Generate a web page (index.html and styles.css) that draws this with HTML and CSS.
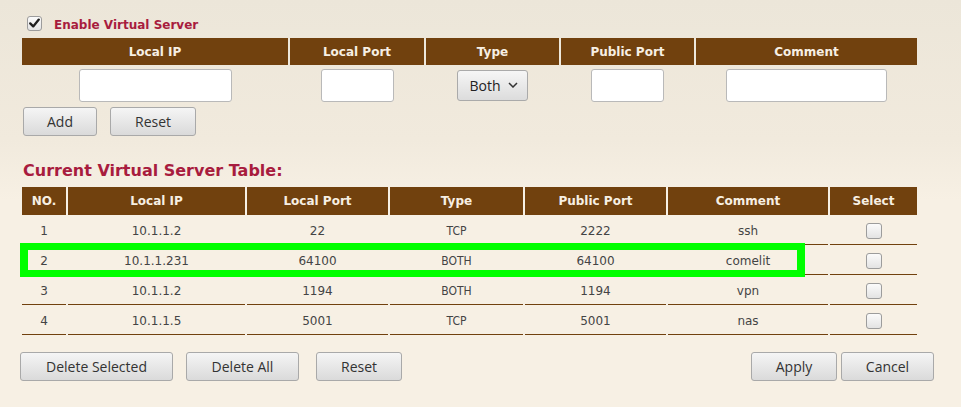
FILE: index.html
```html
<!DOCTYPE html>
<html lang="en">
<head>
    <meta charset="UTF-8">
    <title>Virtual Server</title>
    <link rel="stylesheet" href="styles.css">
</head>
<body>
<div class="page">

    <!-- enable switch -->
    <div class="enable">
        <span class="check checked">
            <svg width="15" height="15" viewBox="0 0 15 15"><path d="M3.2 7.4 L6.2 10.4 L11.8 3.6" fill="none" stroke="#1e1e1e" stroke-width="2.3" stroke-linecap="round" stroke-linejoin="round"/></svg>
        </span>
        <label class="enable-label">Enable Virtual Server</label>
    </div>

    <!-- new rule form -->
    <table class="grid add-form">
        <tr>
            <th class="w-ip">Local IP</th>
            <th class="w-lport">Local Port</th>
            <th class="w-type">Type</th>
            <th class="w-pport">Public Port</th>
            <th class="w-comment">Comment</th>
        </tr>
        <tr>
            <td><input type="text" class="field field-ip"></td>
            <td><input type="text" class="field field-port"></td>
            <td>
                <div class="select">Both
                    <svg width="10" height="6" viewBox="0 0 10 6"><path d="M1 1 L5 5 L9 1" fill="none" stroke="#333" stroke-width="1.5"/></svg>
                </div>
            </td>
            <td><input type="text" class="field field-port"></td>
            <td><input type="text" class="field field-comment"></td>
        </tr>
    </table>

    <div class="actions">
        <button class="btn btn-add">Add</button>
        <button class="btn btn-reset">Reset</button>
    </div>

    <h2 class="section-title">Current Virtual Server Table:</h2>

    <div class="list-wrap">
        <table class="grid list">
            <tr>
                <th class="l-no">NO.</th>
                <th class="l-ip">Local IP</th>
                <th class="l-lport">Local Port</th>
                <th class="l-type">Type</th>
                <th class="l-pport">Public Port</th>
                <th class="l-comment">Comment</th>
                <th class="l-select">Select</th>
            </tr>
            <tr>
                <td>1</td><td>10.1.1.2</td><td>22</td><td class="type">TCP</td><td>2222</td><td>ssh</td>
                <td><span class="check"></span></td>
            </tr>
            <tr>
                <td>2</td><td>10.1.1.231</td><td>64100</td><td class="type">BOTH</td><td>64100</td><td>comelit</td>
                <td><span class="check"></span></td>
            </tr>
            <tr>
                <td>3</td><td>10.1.1.2</td><td>1194</td><td class="type">BOTH</td><td>1194</td><td>vpn</td>
                <td><span class="check"></span></td>
            </tr>
            <tr>
                <td>4</td><td>10.1.1.5</td><td>5001</td><td class="type">TCP</td><td>5001</td><td>nas</td>
                <td><span class="check"></span></td>
            </tr>
        </table>
        <!-- annotation box drawn over row 2 -->
        <div class="highlight"></div>
    </div>

    <div class="footer">
        <div class="group">
            <button class="btn btn-del-sel">Delete Selected</button>
            <button class="btn btn-del-all">Delete All</button>
            <button class="btn btn-reset2">Reset</button>
        </div>
        <div class="group group-right">
            <button class="btn btn-apply">Apply</button>
            <button class="btn btn-cancel">Cancel</button>
        </div>
    </div>

</div>
</body>
</html>
```

FILE: styles.css
```css
/* page */
html, body {
    margin: 0;
    height: 100%;
}
body {
    font-family: "DejaVu Sans", sans-serif;
    font-size: 12px;
    color: #444;
    background: linear-gradient(#ece6d9 0px, #f1eadd 140px, #f7f0e4 200px, #f7f0e4 100%);
}
.page {
    padding: 16px 0 0 20px;
}

/* enable row */
.enable {
    display: flex;
    align-items: center;
    height: 15px;
}
.enable .check {
    margin-left: 7px;
}
.enable-label {
    margin-left: 12px;
    margin-top: 2px;
    font-weight: bold;
    color: #a81c3e;
}

/* fake checkbox */
.check {
    display: inline-block;
    width: 16px;
    height: 16px;
    box-sizing: border-box;
    border: 1px solid #9c9c9c;
    border-radius: 3px;
    background: linear-gradient(#fbfbfb, #e3e3e3);
    vertical-align: middle;
    position: relative;
}
.enable .check {
    width: 15px;
    height: 15px;
}
.check svg {
    position: absolute;
    left: -1px;
    top: -1px;
}

/* brown header tables */
.grid {
    border-collapse: separate;
    border-spacing: 2px;
    table-layout: fixed;
    width: 899px;
}
.grid th {
    background-color: #71410e;
    color: #f7efe3;
    font-weight: bold;
    font-size: 12px;
    text-align: center;
    padding: 0;
}
.grid td {
    text-align: center;
    padding: 0;
}

.add-form {
    margin-top: 5px;
}
.add-form th {
    height: 27px;
}
.add-form td {
    height: 36px;
    vertical-align: middle;
}
.w-ip { width: 266px; }
.w-lport { width: 134px; }
.w-type { width: 133px; }
.w-pport { width: 133px; }
.w-comment { width: 221px; }

.field {
    box-sizing: border-box;
    height: 33px;
    border: 1px solid #b9b9b9;
    border-radius: 3px;
    background: #fff;
    margin: 0;
    padding: 0 4px;
    vertical-align: middle;
}
.field-ip { width: 153px; }
.field-port { width: 73px; }
.field-comment { width: 161px; }

.select {
    display: inline-flex;
    align-items: center;
    justify-content: center;
    gap: 7px;
    box-sizing: border-box;
    width: 71px;
    height: 31px;
    border: 1px solid #aaa;
    border-radius: 3px;
    background: linear-gradient(#f6f6f6, #dcdcdc);
    font-family: "Open Sans", sans-serif;
    font-size: 14px;
    color: #222;
    vertical-align: middle;
    padding-left: 2px;
}

/* buttons */
.btn {
    box-sizing: border-box;
    height: 29px;
    border: 1px solid #a9a9a9;
    border-radius: 3px;
    background: linear-gradient(#f5f5f5, #dadada);
    font-family: "Open Sans", sans-serif;
    font-size: 14px;
    color: #333;
    padding: 0;
    margin: 0;
}
.actions {
    display: flex;
    gap: 13px;
    margin-top: 2px;
    padding-left: 3px;
}
.btn-add { width: 74px; }
.btn-reset { width: 86px; }

/* current table */
.section-title {
    margin: 25px 0 4px;
    padding-left: 3px;
    font-size: 16px;
    line-height: 20px;
    color: #a81c3e;
}
.list-wrap {
    position: relative;
    width: 899px;
}
.list th {
    height: 28px;
}
.list td {
    box-sizing: border-box;
    height: 28px;
    border-bottom: 1px solid #71410e;
    vertical-align: middle;
    padding-top: 1px;
}
.list td.type {
    font-family: "DejaVu Sans Condensed", "DejaVu Sans", sans-serif;
}
.l-no { width: 44px; }
.l-ip { width: 177px; }
.l-lport { width: 141px; }
.l-type { width: 133px; }
.l-pport { width: 141px; }
.l-comment { width: 160px; }
.l-select { width: 87px; }

.highlight {
    position: absolute;
    left: 0;
    top: 58px;
    width: 785px;
    height: 34px;
    box-sizing: border-box;
    border: solid #00ff00;
    border-width: 7px 8px;
}

/* bottom buttons */
.footer {
    display: flex;
    justify-content: space-between;
    width: 914px;
    margin-top: 15px;
}
.group {
    display: flex;
    gap: 13px;
}
.group-right {
    gap: 4px;
}
.btn-reset2 {
    margin-left: 4px;
    width: 86px;
}
.btn-del-sel { width: 153px; }
.btn-del-all { width: 113px; }
.btn-apply { width: 86px; }
.btn-cancel { width: 93px; }
```
